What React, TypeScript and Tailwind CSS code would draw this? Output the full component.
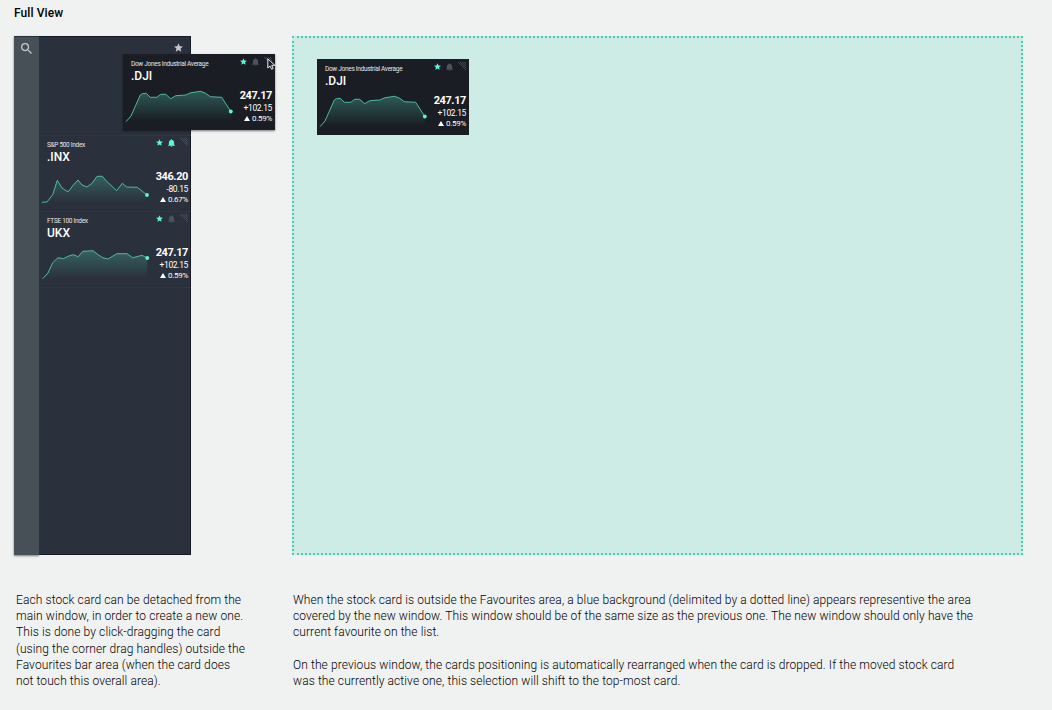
import React from "react";

type Stock = {
  name: string;
  symbol: string;
  price: string;
  change: string;
  percent: string;
  alert: boolean;
  points: [number, number][];
};

const dji: Stock = {
  name: "Dow Jones Industrial Average",
  symbol: ".DJI",
  price: "247.17",
  change: "+102.15",
  percent: "0.59%",
  alert: false,
  points: [
    [3, 67.7], [8, 62], [17.3, 41], [19.3, 39.7], [23.3, 39.3], [27.3, 43.3], [33.7, 43.3], [37.7, 40.3], [42.7, 40.3],
    [47.7, 44.7], [52.7, 41.7], [62.7, 41], [68, 38.7], [77.7, 37.3], [82.7, 39.3], [87.3, 42.7], [98.7, 43.3], [107.8, 57.5],
  ],
};

const inx: Stock = {
  name: "S&P 500 Index",
  symbol: ".INX",
  price: "346.20",
  change: "-80.15",
  percent: "0.67%",
  alert: true,
  points: [
    [3, 67.3], [8, 67], [13.7, 59.7], [18.3, 45.3], [23, 53], [28, 56.3], [29.7, 56.3], [34.3, 50], [39, 45], [43, 50],
    [48, 52], [53, 48.3], [58, 41.3], [63.3, 41.3], [68.3, 47], [73, 51.3], [77.7, 55.7], [83.3, 48.3], [87.7, 52],
    [98.3, 52.3], [108, 60],
  ],
};

const ukx: Stock = {
  name: "FTSE 100 Index",
  symbol: "UKX",
  price: "247.17",
  change: "+102.15",
  percent: "0.59%",
  alert: false,
  points: [
    [3.7, 67.7], [9, 62], [13.7, 51.7], [19, 46.7], [24.3, 47.7], [29, 45.3], [34, 43.7], [39.3, 45.7], [43.7, 40.3],
    [54, 39.7], [59, 43.7], [63.7, 46.7], [69, 48], [77.7, 42.7], [88, 42.7], [93.7, 46.7], [103, 44.3], [108.3, 47],
  ],
};

const STAR = "M12 17.27 18.18 21l-1.64-7.03L22 9.24l-7.19-.61L12 2 9.19 8.63 2 9.24l5.46 4.73L5.82 21z";

function Star({ className }: { className: string }) {
  return (
    <svg viewBox="2 2 20 19" className={className} fill="currentColor">
      <path d={STAR} />
    </svg>
  );
}

function Bell({ className }: { className: string }) {
  return (
    <svg viewBox="4 2 16 20" className={className} fill="currentColor" preserveAspectRatio="none">
      <path d="M12 22c1.1 0 2-.9 2-2h-4c0 1.1.9 2 2 2zm6-6v-5c0-3.07-1.63-5.64-4.5-6.32V4c0-.83-.67-1.5-1.5-1.5s-1.500.67-1.500 1.500v.68C7.640 5.360 6 7.920 6 11v5l-2 2v1h16v-1l-2-2z" />
    </svg>
  );
}

function DragHandle() {
  return (
    <svg viewBox="0 0 8 8" className="h-2 w-2 text-[#4b535d]" stroke="currentColor" strokeWidth="0.8">
      <path d="M0 0 8 8M2 0 8 6M4 0 8 4M6 0 8 2" />
    </svg>
  );
}

function Chart({ stock, id }: { stock: Stock; id: string }) {
  const line = stock.points.map((p) => p.join(",")).join(" ");
  const first = stock.points[0];
  const last = stock.points[stock.points.length - 1];
  return (
    <svg viewBox="0 34 113 38" className="h-[38px] w-[113px] shrink-0" fill="none">
      <defs>
        <linearGradient id={id} x1="0" y1="38" x2="0" y2="67" gradientUnits="userSpaceOnUse">
          <stop offset="0" stopColor="#4fc9b0" stopOpacity="0.34" />
          <stop offset="1" stopColor="#4fc9b0" stopOpacity="0" />
        </linearGradient>
      </defs>
      <polygon points={`${line} ${last[0]},69 ${first[0]},69`} fill={`url(#${id})`} />
      <polyline points={line} stroke="#55c4ae" strokeWidth="0.9" strokeLinejoin="round" />
      <circle cx={last[0]} cy={last[1]} r="1.9" fill="#5ff5dc" />
    </svg>
  );
}

function StockCard({ stock, id, className = "" }: { stock: Stock; id: string; className?: string }) {
  return (
    <div className={`flex h-[76px] w-[152px] shrink-0 flex-col text-white ${className}`}>
      <div className="flex h-[34px] justify-between">
        <div className="pl-2 pt-[5px]">
          <div className="whitespace-nowrap pt-px text-[6.5px] leading-[8px] tracking-[-0.3px] text-[#e4e6e8]">{stock.name}</div>
          <div className="pt-px text-[12px] font-medium leading-[14px]">{stock.symbol}</div>
        </div>
        <div className="flex items-start pr-[3px] pt-[3px]">
          <Star className="mr-[5px] mt-[0.5px] h-[7px] w-[7px] text-[#5ff5dc]" />
          <Bell className={`mr-[5px] mt-[0.5px] h-2 w-[7px] ${stock.alert ? "text-[#5ff5dc]" : "text-[#4b535d]"}`} />
          <DragHandle />
        </div>
      </div>
      <div className="flex h-[42px]">
        <Chart stock={stock} id={id} />
        <div className="flex flex-1 flex-col items-end pr-[3px] pt-[1px]">
          <div className="text-[11px] font-bold leading-[13px] tracking-[-0.4px]">{stock.price}</div>
          <div className="pt-[1px] text-[8.5px] leading-[11px] tracking-[-0.35px]">{stock.change}</div>
          <div className="flex items-center gap-[2px] text-[8px] leading-[9px] tracking-[-0.3px]">
            <svg viewBox="0 0 6 5" className="h-[5px] w-[6px]" fill="currentColor">
              <path d="M3 0 6 5H0z" />
            </svg>
            {stock.percent}
          </div>
        </div>
      </div>
    </div>
  );
}

export default function App() {
  return (
    <div className="flex h-[710px] w-[1052px] flex-col overflow-hidden bg-[#f0f2f1] pl-[14px] font-['Roboto',sans-serif]">
      <h1 className="h-[36px] pt-[6px] text-[12px] font-medium leading-[15px] tracking-[0.1px] text-black">Full View</h1>

      <div className="flex h-[519px]">
        <div className="relative flex w-[177px]">
          <div className="w-[25px] bg-[#474f57] shadow-[0_1px_2px_rgba(0,0,0,0.5),inset_0_1px_0_#2a313a]">
            <svg viewBox="3 3 17.500 17.500" className="ml-[7px] mt-[6.5px] h-[11px] w-[11px]" fill="#c5c9cc">
              <path d="M15.500 14h-.79l-.28-.27A6.471 6.471 0 0 0 16 9.500 6.500 6.500 0 1 0 9.500 16c1.610 0 3.090-.59 4.230-1.570l.27.28v.79l5 4.990L20.490 19l-4.990-5zm-6 0C7.010 14 5 11.990 5 9.500S7.010 5 9.500 5 14 7.010 14 9.500 11.990 14 9.500 14z" />
            </svg>
          </div>
          <div className="flex w-[152px] flex-col bg-[#2a313d] shadow-[inset_-1px_0_0_#171b28,inset_0_1px_0_#171b28,inset_0_-1px_0_#171b28]">
            <div className="flex h-[99px] justify-end pr-2 pt-[7px]">
              <Star className="h-[9px] w-[9px] text-[#c5c9cc]" />
            </div>
            <StockCard stock={inx} id="area-inx" className="shadow-[inset_0_1px_0_#2d3843]" />
            <StockCard stock={ukx} id="area-ukx" className="shadow-[inset_0_1px_0_#2d3843,0_1px_0_#2d3843]" />
          </div>

          {/* Card being dragged out of the favourites bar */}
          <div className="absolute left-[109px] top-[18px]">
            <StockCard stock={dji} id="area-dji-drag" className="bg-[#1a1e24] shadow-[0_1px_2px_rgba(0,0,0,0.5)]" />
            <svg viewBox="0 0 9 12" className="absolute left-[144px] top-1 h-3 w-[9px]">
              <path d="M.8.8v9.200l2.200-2 1.600 3.300 1.600-.8-1.500-3.200h3.200z" fill="#1a1e24" stroke="#fff" strokeWidth="0.9" />
            </svg>
          </div>
        </div>

        <div className="ml-[101px] w-[731px] border-2 border-dotted border-[#43d0b2] bg-[#cdece5] pl-[23px] pt-[21px]">
          <StockCard stock={dji} id="area-dji" className="bg-[#1a1e24]" />
        </div>
      </div>

      <div className="flex pt-[37px] text-[12px] font-light leading-[16.2px] text-black">
        <p className="w-[278px] whitespace-nowrap pl-[2px] tracking-[0.1px]">
          Each stock card can be detached from the
          <br />
          main window, in order to create a new one.
          <br />
          This is done by click-dragging the card
          <br />
          (using the corner drag handles) outside the
          <br />
          Favourites bar area (when the card does
          <br />
          not touch this overall area).
        </p>
        <div className="flex flex-col gap-[16.2px] whitespace-nowrap pl-[1px] tracking-[0.096px]">
          <p>
            When the stock card is outside the Favourites area, a blue background (delimited by a dotted line) appears representive the area
            <br />
            covered by the new window. This window should be of the same size as the previous one. The new window should only have the
            <br />
            current favourite on the list.
          </p>
          <p>
            On the previous window, the cards positioning is automatically rearranged when the card is dropped. If the moved stock card
            <br />
            was the currently active one, this selection will shift to the top-most card.
          </p>
        </div>
      </div>
    </div>
  );
}
